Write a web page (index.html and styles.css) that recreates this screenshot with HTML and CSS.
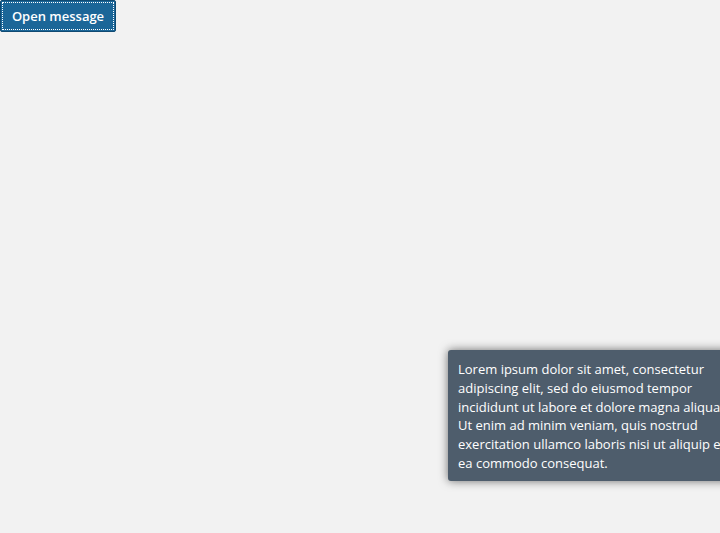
FILE: index.html
```html
<!DOCTYPE html>
<html>
<head>
<meta charset="utf-8">
<link rel="stylesheet" href="styles.css">
</head>
<body>
<button class="open-btn">Open message</button>
<div class="toast">Lorem ipsum dolor sit amet, consectetur adipiscing elit, sed do eiusmod tempor incididunt ut labore et dolore magna aliqua. Ut enim ad minim veniam, quis nostrud exercitation ullamco laboris nisi ut aliquip ex ea commodo consequat.</div>
</body>
</html>
```
FILE: styles.css
```css
html, body {
  margin: 0;
  padding: 0;
  background: #f2f2f2;
  height: 100%;
  overflow: hidden;
  font-family: "Open Sans", "Noto Sans", sans-serif;
}
.open-btn {
  display: block;
  margin: 0;
  height: 32px;
  width: 116px;
  padding: 0;
  white-space: nowrap;
  text-align: center;
  border: 1px solid #0f4a72;
  border-radius: 2px;
  background: #1b6698;
  color: #fff;
  font-family: "Open Sans", "Noto Sans", sans-serif;
  font-size: 13px;
  font-weight: 600;
  outline: 1px dotted #fff;
  outline-offset: -3px;
}
.toast {
  position: absolute;
  left: 448px;
  top: 350px;
  width: 300px;
  box-sizing: border-box;
  padding: 10px 10px 8px 10px;
  background: #4e5d6c;
  color: #fff;
  font-size: 13px;
  line-height: 18.8px;
  font-weight: 400;
  border-radius: 3px;
  box-shadow: 0 0 10px rgba(0,0,0,0.55);
}
```
